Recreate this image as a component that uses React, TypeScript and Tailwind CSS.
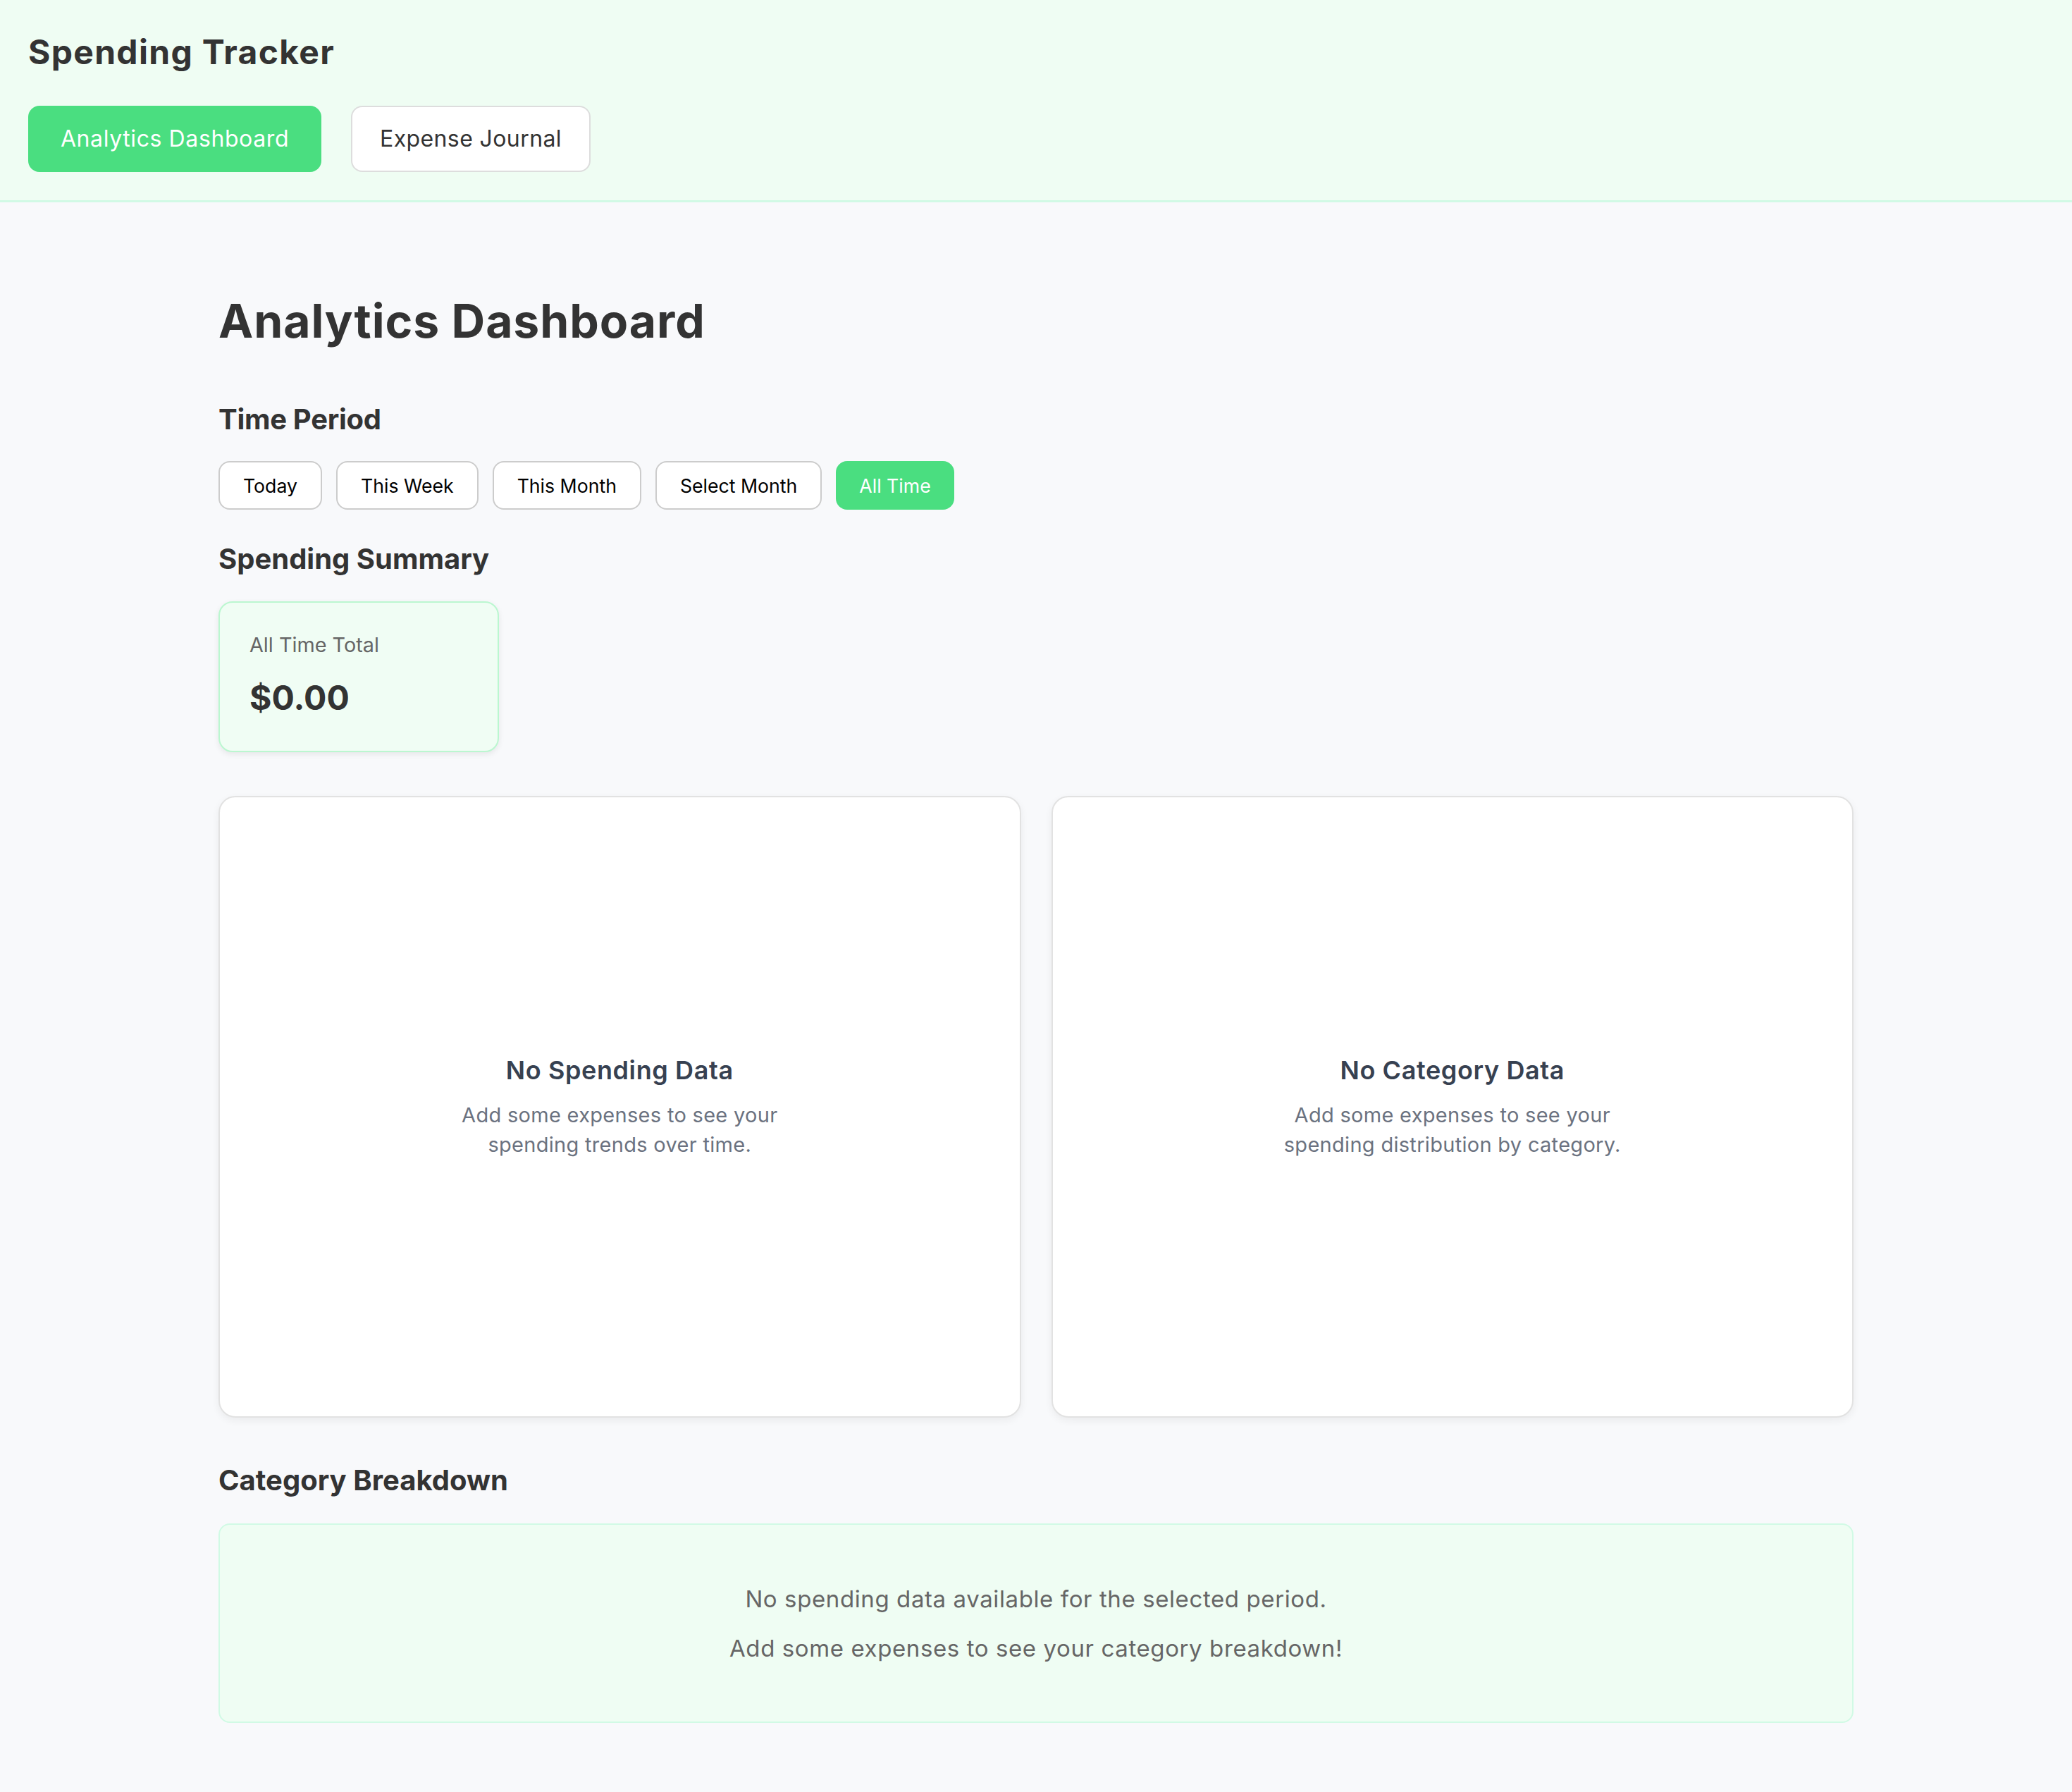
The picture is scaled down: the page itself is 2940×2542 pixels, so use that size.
import { useState } from "react";

const periods = ["Today", "This Week", "This Month", "Select Month", "All Time"];

function EmptyChart({ title, text }: { title: string; text: string }) {
  return (
    <div className="h-[882px] bg-white border-2 border-[#e2e2e2] rounded-[24px] shadow-[0_4px_12px_rgba(0,0,0,0.06)] flex flex-col items-center justify-center">
      <h4 className="text-[36px] font-semibold text-[#374151] leading-tight tracking-[0.6px]">{title}</h4>
      <p className="mt-[20px] max-w-[560px] text-center text-[29px] leading-[42px] tracking-[0.3px] text-[#6b7280]">{text}</p>
    </div>
  );
}

export default function App() {
  const [period, setPeriod] = useState("All Time");
  const [tab, setTab] = useState("analytics");

  return (
    <div className="min-h-screen bg-[#f8f9fb] text-[#333] font-['Inter',sans-serif]">
      <header className="bg-[#effdf3] border-b-[3px] border-[#d1fae5] px-[40px] pt-[45px] pb-[40px]">
        <h1 className="text-[48px] font-bold leading-[58px] tracking-[1.3px]">Spending Tracker</h1>
        <nav className="mt-[47px] flex gap-[42px]">
          <button
            onClick={() => setTab("analytics")}
            className={`h-[94px] w-[416px] rounded-[16px] text-[32px] tracking-[0.6px] ${
              tab === "analytics" ? "bg-[#4ade80] text-white" : "bg-white border-2 border-[#dddddd] text-[#333]"
            }`}
          >
            Analytics Dashboard
          </button>
          <button
            onClick={() => setTab("journal")}
            className={`h-[94px] w-[340px] rounded-[16px] text-[32px] tracking-[0.4px] ${
              tab === "journal" ? "bg-[#4ade80] text-white" : "bg-white border-2 border-[#dddddd] text-[#333]"
            }`}
          >
            Expense Journal
          </button>
        </nav>
      </header>

      <main className="max-w-[2320px] mx-auto pt-[128px] pb-[100px]">
        <h2 className="text-[66px] font-bold leading-[80px] tracking-[0.9px]">Analytics Dashboard</h2>

        <h3 className="mt-[76px] text-[40px] font-bold leading-[48px] tracking-[-0.3px]">Time Period</h3>
        <div className="mt-[35px] flex gap-[20px]">
          {periods.map((p) => (
            <button
              key={p}
              onClick={() => setPeriod(p)}
              className={`h-[69px] px-[33px] rounded-[16px] text-[26.67px] font-['Inter',sans-serif] ${
                period === p ? "bg-[#4ade80] text-white" : "bg-white border-2 border-[#cccccc] text-black"
              }`}
            >
              {p}
            </button>
          ))}
        </div>

        <h3 className="mt-[46px] text-[40px] font-bold leading-[48px]">Spending Summary</h3>
        <div className="mt-[36px] w-[398px] h-[214px] bg-[#f0fdf4] border-2 border-[#bbf7d0] rounded-[20px] shadow-[0_3px_8px_rgba(0,0,0,0.08)] px-[42px] pt-[42px]">
          <div className="text-[28.8px] text-[#666] leading-[36px]">All Time Total</div>
          <div className="mt-[29px] text-[48px] font-bold leading-[56px]">$0.00</div>
        </div>

        <div className="mt-[62px] grid grid-cols-2 gap-[43px]">
          <EmptyChart title="No Spending Data" text="Add some expenses to see your spending trends over time." />
          <EmptyChart title="No Category Data" text="Add some expenses to see your spending distribution by category." />
        </div>

        <h3 className="mt-[65px] text-[40px] font-bold leading-[48px]">Category Breakdown</h3>
        <div className="mt-[37px] h-[283px] bg-[#effdf3] border-2 border-[#d1fae5] rounded-[16px] flex flex-col items-center justify-center gap-[32px] text-[33px] text-[#666] leading-[38px] tracking-[0.6px]">
          <p>No spending data available for the selected period.</p>
          <p>Add some expenses to see your category breakdown!</p>
        </div>
      </main>
    </div>
  );
}
